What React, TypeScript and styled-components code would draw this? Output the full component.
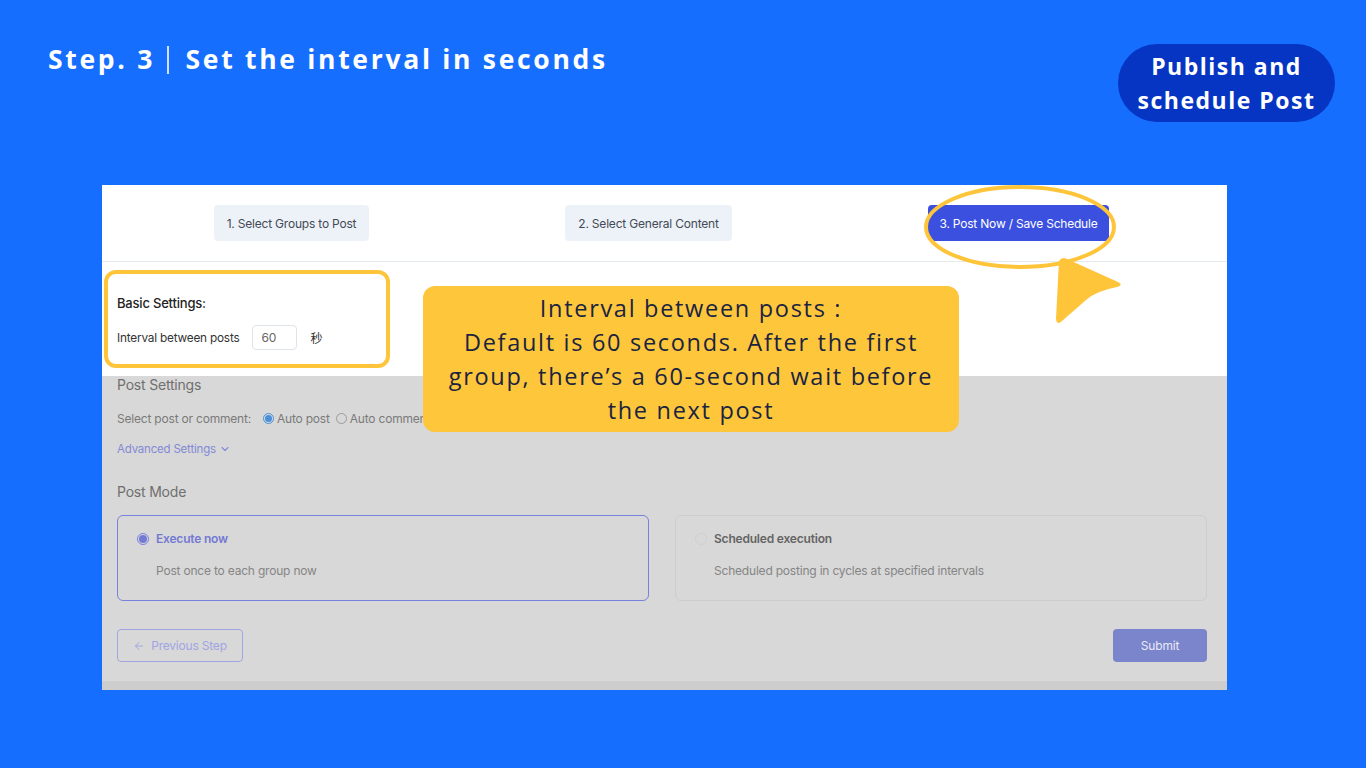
import styled, { createGlobalStyle } from 'styled-components';

const GlobalStyle = createGlobalStyle`
  html, body {
    margin: 0;
    padding: 0;
    background: #166eff;
  }
  * {
    box-sizing: border-box;
  }
`;

const Page = styled.div`
  width: 1366px;
  height: 768px;
  background: #166eff;
  padding: 44px 31px 0 48px;
  font-family: 'Open Sans', 'Noto Sans', sans-serif;
  overflow: hidden;
`;

const TopBar = styled.header`
  display: flex;
  justify-content: space-between;
  align-items: flex-start;
`;

const Title = styled.h1`
  margin: 0;
  display: flex;
  align-items: center;
  color: #ffffff;
  font-size: 26.5px;
  font-weight: 700;
  letter-spacing: 2.7px;
  line-height: 31px;
`;

const Divider = styled.span`
  width: 1.5px;
  height: 28px;
  margin: 0 17px 0 12px;
  background: rgba(255, 255, 255, 0.8);
`;

const Badge = styled.div`
  width: 217px;
  height: 78px;
  border-radius: 39px;
  background: #0535c2;
  color: #ffffff;
  font-size: 23px;
  font-weight: 700;
  letter-spacing: 1.5px;
  line-height: 34px;
  text-align: center;
  display: flex;
  flex-direction: column;
  justify-content: center;
`;

const Panel = styled.section`
  position: relative;
  margin: 63px 0 0 54px;
  width: 1125px;
  background: #ffffff;
  font-family: Inter, 'Noto Sans', sans-serif;
`;

const StepsBar = styled.nav`
  height: 77px;
  display: flex;
  justify-content: space-between;
  align-items: center;
  padding: 0 118px 0 112px;
  border-bottom: 1px solid #e6ebf2;
`;

const StepButton = styled.div<{ $active?: boolean; $width: number }>`
  width: ${({ $width }) => $width}px;
  height: 36px;
  border-radius: 4px;
  display: flex;
  align-items: center;
  justify-content: center;
  padding-top: 1px;
  font-size: 12px;
  letter-spacing: -0.2px;
  background: ${({ $active }) => ($active ? '#3c50df' : '#edf2f9')};
  color: ${({ $active }) => ($active ? '#ffffff' : '#444a55')};
`;

const BasicSection = styled.div`
  height: 114px;
  padding: 8px 0 0 2px;
`;

const HighlightBox = styled.div`
  width: 286px;
  height: 98px;
  border: 4px solid #fec53b;
  border-radius: 12px;
  padding: 21px 0 0 9px;
`;

const BasicTitle = styled.div`
  font-size: 13px;
  font-weight: 500;
  color: #222;
  letter-spacing: -0.2px;
`;

const IntervalRow = styled.div`
  margin-top: 14px;
  display: flex;
  align-items: center;
  font-size: 11.8px;
  color: #333;
  letter-spacing: -0.2px;
`;

const NumberInput = styled.div`
  width: 45px;
  height: 25px;
  margin-left: 13px;
  border: 1px solid #dfe3ea;
  border-radius: 4px;
  padding-left: 8px;
  display: flex;
  align-items: center;
  font-size: 12px;
  color: #666;
`;

const Unit = styled.span`
  margin-left: 13px;
  font-family: 'Noto Sans CJK SC', sans-serif;
  font-size: 12px;
  color: #333;
`;

const DimSection = styled.div`
  background: #d8d8d8;
  padding: 0 20px 0 15px;
`;

const SectionLabel = styled.div<{ $top: number }>`
  padding-top: ${({ $top }) => $top}px;
  font-size: 14px;
  color: #6f6f6f;
  letter-spacing: -0.2px;
  line-height: 18px;
`;

const OptionRow = styled.div`
  margin-top: 17px;
  display: flex;
  align-items: center;
  font-size: 12px;
  color: #7a7a7a;
  letter-spacing: -0.2px;
`;

const Radio = styled.span<{ $checked?: boolean; $gap: number }>`
  width: 11px;
  height: 11px;
  border-radius: 50%;
  border: 1px solid ${({ $checked }) => ($checked ? '#4a90d9' : '#9a9a9a')};
  display: inline-flex;
  align-items: center;
  justify-content: center;
  margin: 0 3px 0 ${({ $gap }) => $gap}px;
  &::after {
    content: '';
    width: 7px;
    height: 7px;
    border-radius: 50%;
    background: ${({ $checked }) => ($checked ? '#4a90d9' : 'transparent')};
  }
`;

const AdvancedLink = styled.div`
  margin-top: 16px;
  display: flex;
  align-items: center;
  gap: 3px;
  font-size: 11.5px;
  color: #8389d6;
  letter-spacing: -0.2px;
`;

const ModeGrid = styled.div`
  margin-top: 14px;
  display: grid;
  grid-template-columns: 1fr 1fr;
  gap: 26px;
`;

const ModeCard = styled.div<{ $selected?: boolean }>`
  height: 86px;
  border-radius: 6px;
  border: ${({ $selected }) => ($selected ? '1.5px solid #7a80dd' : '1px solid #cdcdcd')};
  padding: 15px 0 0 19px;
`;

const ModeTitle = styled.div<{ $selected?: boolean }>`
  display: flex;
  align-items: center;
  gap: 7px;
  font-size: 12px;
  font-weight: 600;
  color: ${({ $selected }) => ($selected ? '#7479d4' : '#646464')};
  letter-spacing: -0.2px;
`;

const ModeRadio = styled.span<{ $selected?: boolean }>`
  width: 12px;
  height: 12px;
  border-radius: 50%;
  border: 1px solid ${({ $selected }) => ($selected ? '#7a80dd' : '#d0d0d0')};
  display: inline-flex;
  align-items: center;
  justify-content: center;
  &::after {
    content: '';
    width: 8px;
    height: 8px;
    border-radius: 50%;
    background: ${({ $selected }) => ($selected ? '#7479d4' : 'transparent')};
  }
`;

const ModeDesc = styled.div`
  margin: 17px 0 0 19px;
  font-size: 12px;
  color: #858585;
  letter-spacing: -0.2px;
`;

const Footer = styled.div`
  display: flex;
  justify-content: space-between;
  align-items: center;
  padding: 28px 0 19px;
`;

const GhostButton = styled.div`
  width: 126px;
  height: 33px;
  border: 1px solid #a0a5e2;
  border-radius: 4px;
  display: flex;
  align-items: center;
  justify-content: center;
  gap: 6px;
  font-size: 12px;
  color: #a0a5e2;
  letter-spacing: -0.2px;
`;

const SubmitButton = styled.div`
  width: 94px;
  height: 33px;
  border-radius: 4px;
  background: #7b85cc;
  display: flex;
  align-items: center;
  justify-content: center;
  font-size: 12px;
  color: #e8eaf8;
  letter-spacing: -0.2px;
`;

const BottomStrip = styled.div`
  height: 9px;
  margin: 0 -20px 0 -15px;
  background: #cdcdcd;
`;

const Tooltip = styled.div`
  position: absolute;
  left: 321px;
  top: 101px;
  width: 536px;
  height: 146px;
  border-radius: 12px;
  background: #fec63b;
  color: #1a2440;
  font-family: 'Open Sans', 'Noto Sans', sans-serif;
  font-size: 23.5px;
  letter-spacing: 1.7px;
  line-height: 34px;
  text-align: center;
  display: flex;
  flex-direction: column;
  justify-content: center;
  white-space: nowrap;
`;

const Annotation = styled.svg`
  position: absolute;
  left: 0;
  top: 0;
  overflow: visible;
  pointer-events: none;
`;

export default function App() {
  return (
    <>
      <GlobalStyle />
      <Page>
        <TopBar>
          <Title>
            <span>Step. 3</span>
            <Divider />
            <span>Set the interval in seconds</span>
          </Title>
          <Badge>
            <span>Publish and</span>
            <span>schedule Post</span>
          </Badge>
        </TopBar>

        <Panel>
          <StepsBar>
            <StepButton $width={155}>1. Select Groups to Post</StepButton>
            <StepButton $width={167}>2. Select General Content</StepButton>
            <StepButton $width={181} $active>
              3. Post Now / Save Schedule
            </StepButton>
          </StepsBar>

          <BasicSection>
            <HighlightBox>
              <BasicTitle>Basic Settings:</BasicTitle>
              <IntervalRow>
                Interval between posts
                <NumberInput>60</NumberInput>
                <Unit>秒</Unit>
              </IntervalRow>
            </HighlightBox>
          </BasicSection>

          <DimSection>
            <SectionLabel $top={0}>Post Settings</SectionLabel>
            <OptionRow>
              Select post or comment:
              <Radio $checked $gap={12} />
              Auto post
              <Radio $gap={6} />
              Auto comment
            </OptionRow>
            <AdvancedLink>
              Advanced Settings
              <svg width="12" height="12" viewBox="0 0 24 24" fill="none" stroke="#8389d6" strokeWidth="2.2" strokeLinecap="round" strokeLinejoin="round">
                <path d="m6 9 6 6 6-6" />
              </svg>
            </AdvancedLink>
            <SectionLabel $top={27}>Post Mode</SectionLabel>
            <ModeGrid>
              <ModeCard $selected>
                <ModeTitle $selected>
                  <ModeRadio $selected />
                  Execute now
                </ModeTitle>
                <ModeDesc>Post once to each group now</ModeDesc>
              </ModeCard>
              <ModeCard>
                <ModeTitle>
                  <ModeRadio />
                  Scheduled execution
                </ModeTitle>
                <ModeDesc>Scheduled posting in cycles at specified intervals</ModeDesc>
              </ModeCard>
            </ModeGrid>
            <Footer>
              <GhostButton>
                <svg width="12" height="12" viewBox="0 0 24 24" fill="none" stroke="#a0a5e2" strokeWidth="2" strokeLinecap="round" strokeLinejoin="round">
                  <path d="M19 12H5" />
                  <path d="m12 19-7-7 7-7" />
                </svg>
                Previous Step
              </GhostButton>
              <SubmitButton>Submit</SubmitButton>
            </Footer>
            <BottomStrip />
          </DimSection>

          <Tooltip>
            <span>Interval between posts :</span>
            <span>Default is 60 seconds. After the first</span>
            <span>group, there’s a 60-second wait before</span>
            <span>the next post</span>
          </Tooltip>

          <Annotation width="1125" height="200">
            <ellipse cx="918" cy="42" rx="94" ry="40" fill="none" stroke="#fec53b" strokeWidth="4" />
            <path
              d="M957 76 Q960 71 965 74 L1016 97 Q1022 100 1015 102 Q994 106 984 115 L960 136 Q955 141 954 134 Z"
              fill="#fec53b"
            />
          </Annotation>
        </Panel>
      </Page>
    </>
  );
}
